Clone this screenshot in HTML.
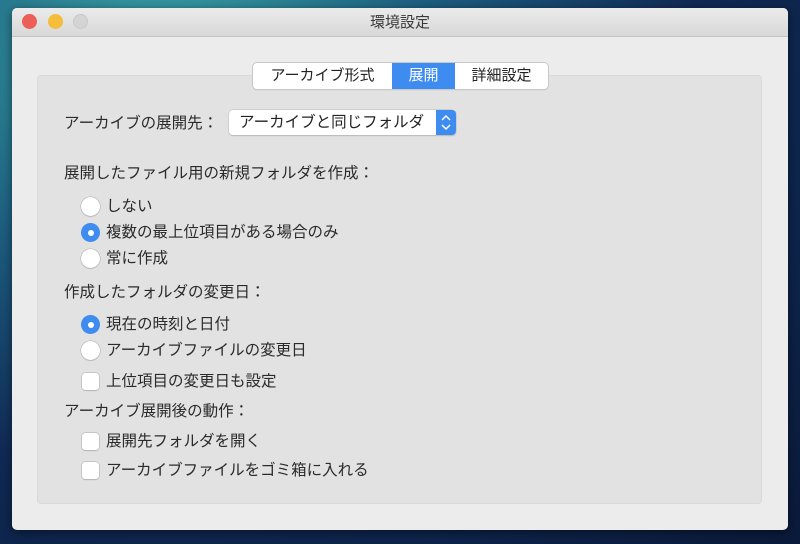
<!DOCTYPE html>
<html><head><meta charset="utf-8"><style>
*{margin:0;padding:0;box-sizing:border-box}
body{width:800px;height:544px;overflow:hidden;position:relative;font-family:"Liberation Sans","Noto Sans CJK JP",sans-serif;
background:radial-gradient(ellipse at 20% 10%,#3aa6a8 0%,#1d5f80 30%,#102a55 60%,#0a1a3a 100%);}
.win{position:absolute;left:12px;top:8px;width:776px;height:522px;background:#ececec;border-radius:5px;overflow:hidden;box-shadow:0 2px 10px rgba(0,0,0,.5)}
.tb{height:29px;background:linear-gradient(#ebebeb,#d8d8d8);border-bottom:1px solid #c4c4c4;text-align:center;font-size:15px;line-height:29px;color:#3a3a3a}
.dot{position:absolute;top:6px;width:15px;height:15px;border-radius:50%}
.panel{position:absolute;left:25px;top:67px;width:725px;height:429px;background:#e2e2e2;border-radius:4px;border:1px solid #dadada}
.tabs{position:absolute;left:253px;top:63px;height:26px;display:flex;background:#fff;border-radius:4px;box-shadow:0 0 0 1px #c8c8c8,0 1px 1px rgba(0,0,0,.2);font-size:15px;line-height:26px;color:#222;overflow:hidden}
.tabs div{text-align:center}
.tabs .on{background:#3f8cf1;color:#fff}
.t{position:absolute;font-size:15.5px;color:#2a2a2a;white-space:nowrap;line-height:18px}
.r{position:absolute;width:19px;height:19px;border-radius:50%;background:#fff;box-shadow:0 0 0 .5px #aaa,0 1px 1px rgba(0,0,0,.15)}
.r.on{background:#3f8cf1;box-shadow:none}
.r.on::after{content:"";position:absolute;left:6.5px;top:6.5px;width:6px;height:6px;border-radius:50%;background:#fff}
.c{position:absolute;width:17px;height:17px;border-radius:3px;background:#fff;box-shadow:0 0 0 .5px #aaa,0 1px 1px rgba(0,0,0,.15)}
.pop{position:absolute;left:229px;top:110px;width:227px;height:25px;background:#fff;border-radius:4px;box-shadow:0 0 0 .5px #bbb,0 1px 1px rgba(0,0,0,.2);font-size:15.5px;line-height:25px;padding-left:10px;color:#222;white-space:nowrap}
.pop .ar{position:absolute;right:0;top:0;width:20px;height:25px;background:#3f8cf1;border-radius:0 4px 4px 0}
</style></head><body>
<div class="win">
<div class="tb">環境設定</div>
<div class="dot" style="left:10px;background:#ec5f56"></div>
<div class="dot" style="left:36px;background:#f4bd3b"></div>
<div class="dot" style="left:61px;background:#d4d4d4;border:1px solid #c8c8c8"></div>
<div class="panel"></div>
</div>
<div class="tabs"><div style="width:139px">アーカイブ形式</div><div class="on" style="width:63px">展開</div><div style="width:93px">詳細設定</div></div>
<div class="t" style="left:64px;top:115px">アーカイブの展開先：</div>
<div class="pop">アーカイブと同じフォルダ<div class="ar"><svg width="20" height="25"><path d="M6 10l4-4 4 4M6 15l4 4 4-4" stroke="#fff" stroke-width="1.5" fill="none"/></svg></div></div>
<div class="t" style="left:64px;top:165px">展開したファイル用の新規フォルダを作成：</div>
<div class="r" style="left:81px;top:197px"></div><div class="t" style="left:106px;top:198px">しない</div>
<div class="r on" style="left:81px;top:223px"></div><div class="t" style="left:106px;top:224px">複数の最上位項目がある場合のみ</div>
<div class="r" style="left:81px;top:249px"></div><div class="t" style="left:106px;top:250px">常に作成</div>
<div class="t" style="left:64px;top:284px">作成したフォルダの変更日：</div>
<div class="r on" style="left:81px;top:315px"></div><div class="t" style="left:106px;top:316px">現在の時刻と日付</div>
<div class="r" style="left:81px;top:341px"></div><div class="t" style="left:106px;top:342px">アーカイブファイルの変更日</div>
<div class="c" style="left:82px;top:373px"></div><div class="t" style="left:106px;top:373px">上位項目の変更日も設定</div>
<div class="t" style="left:64px;top:403px">アーカイブ展開後の動作：</div>
<div class="c" style="left:82px;top:433px"></div><div class="t" style="left:106px;top:433px">展開先フォルダを開く</div>
<div class="c" style="left:82px;top:462px"></div><div class="t" style="left:106px;top:462px">アーカイブファイルをゴミ箱に入れる</div>
</body></html>
